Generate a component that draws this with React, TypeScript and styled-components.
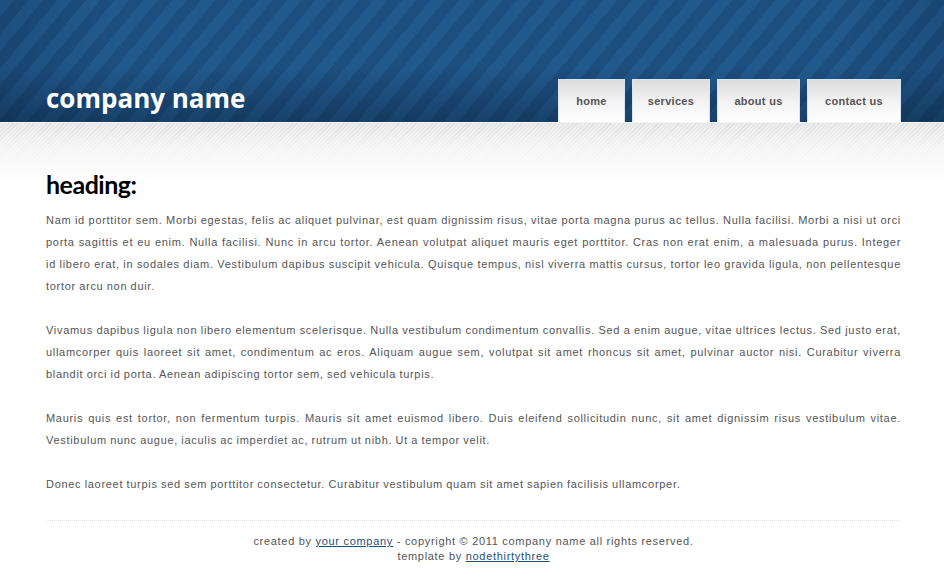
import React from "react";
import styled, { createGlobalStyle } from "styled-components";

const Global = createGlobalStyle`
  html, body { margin: 0; padding: 0; background: #fff; }
  body { font-family: "Liberation Sans", Arial, sans-serif; }
`;

const Header = styled.header`
  height: 122px;
  background:
    linear-gradient(to bottom, rgba(0,0,0,0) 0%, rgba(0,0,0,0) 55%, rgba(5,20,40,0.35) 100%),
    linear-gradient(to right, rgba(5,20,40,0.15) 0%, rgba(0,0,0,0) 12%, rgba(0,0,0,0) 88%, rgba(5,20,40,0.15) 100%),
    repeating-linear-gradient(130deg, #22598d 0px, #22598d 11px, #1c4e7f 11px, #1c4e7f 22px);
`;

const Container = styled.div`
  width: 855px;
  margin: 0 43px 0 46px;
`;

const HeaderInner = styled(Container)`
  height: 122px;
  display: flex;
  align-items: flex-end;
  justify-content: space-between;
`;

const Logo = styled.h1`
  margin: 0 0 8px 0;
  font-family: "Open Sans", "Liberation Sans", sans-serif;
  font-weight: 700;
  font-size: 26px;
  letter-spacing: 0px;
  line-height: 32px;
  color: #fff;
`;

const Nav = styled.nav`
  display: flex;
  gap: 7px;
`;

const Tab = styled.a<{ $w: number }>`
  box-sizing: border-box;
  width: ${(p) => p.$w}px;
  height: 43px;
  display: flex;
  align-items: center;
  justify-content: center;
  border: 1px solid #d6e6f2;
  border-bottom: none;
  background: linear-gradient(to bottom, #dcdcdc 0%, #f4f4f4 55%, #ffffff 100%);
  font-family: "Liberation Sans", Arial, sans-serif;
  font-weight: 700;
  font-size: 11px;
  letter-spacing: 0.3px;
  color: #555;
  text-decoration: none;
`;

const Main = styled.main`
  background:
    linear-gradient(to bottom, rgba(255,255,255,0) 0px, rgba(255,255,255,0.6) 25px, #fff 60px) 0 0 / 100% 60px no-repeat,
    repeating-linear-gradient(135deg, #dfdfdf 0px, #dfdfdf 1px, #ececec 1px, #ececec 3px) 0 0 / 100% 60px no-repeat;
  border-top: 1px solid #f4f4f4;
  padding-top: 46px;
`;

const Heading = styled.h2`
  margin: 0 0 10px 0;
  font-family: Lato, "Liberation Sans", sans-serif;
  font-weight: 700;
  font-size: 25px;
  letter-spacing: -0.5px;
  line-height: 30px;
  color: #000;
`;

const Para = styled.div`
  margin: 0 0 22px 0;
  font-size: 11px;
  line-height: 22px;
  letter-spacing: 0.7px;
  word-spacing: -0.4px;
  color: #555;
`;

const Line = styled.div<{ $last?: boolean }>`
  white-space: nowrap;
  text-align: justify;
  text-align-last: ${(p) => (p.$last ? "left" : "justify")};
`;

const Footer = styled.footer`
  margin-top: 25px;
  border-top: 1px dotted #e2e2e2;
  padding: 13px 0 20px;
  text-align: center;
  font-size: 11px;
  line-height: 15px;
  letter-spacing: 0.7px;
  color: #555;
`;

const FootLink = styled.a`
  color: #1e4e78;
  text-decoration: underline;
`;

const paragraphs: string[][] = [
  [
    "Nam id porttitor sem. Morbi egestas, felis ac aliquet pulvinar, est quam dignissim risus, vitae porta magna purus ac tellus. Nulla facilisi. Morbi a nisi ut orci",
    "porta sagittis et eu enim. Nulla facilisi. Nunc in arcu tortor. Aenean volutpat aliquet mauris eget porttitor. Cras non erat enim, a malesuada purus. Integer",
    "id libero erat, in sodales diam. Vestibulum dapibus suscipit vehicula. Quisque tempus, nisl viverra mattis cursus, tortor leo gravida ligula, non pellentesque",
    "tortor arcu non duir.",
  ],
  [
    "Vivamus dapibus ligula non libero elementum scelerisque. Nulla vestibulum condimentum convallis. Sed a enim augue, vitae ultrices lectus. Sed justo erat,",
    "ullamcorper quis laoreet sit amet, condimentum ac eros. Aliquam augue sem, volutpat sit amet rhoncus sit amet, pulvinar auctor nisi. Curabitur viverra",
    "blandit orci id porta. Aenean adipiscing tortor sem, sed vehicula turpis.",
  ],
  [
    "Mauris quis est tortor, non fermentum turpis. Mauris sit amet euismod libero. Duis eleifend sollicitudin nunc, sit amet dignissim risus vestibulum vitae.",
    "Vestibulum nunc augue, iaculis ac imperdiet ac, rutrum ut nibh. Ut a tempor velit.",
  ],
  [
    "Donec laoreet turpis sed sem porttitor consectetur. Curabitur vestibulum quam sit amet sapien facilisis ullamcorper.",
  ],
];

const tabs = [
  { label: "home", w: 67 },
  { label: "services", w: 78 },
  { label: "about us", w: 83 },
  { label: "contact us", w: 94 },
];

export default function App() {
  return (
    <>
      <Global />
      <Header>
        <HeaderInner>
          <Logo>company name</Logo>
          <Nav>
            {tabs.map((t) => (
              <Tab key={t.label} href="#" $w={t.w}>
                {t.label}
              </Tab>
            ))}
          </Nav>
        </HeaderInner>
      </Header>
      <Main>
        <Container>
          <Heading>heading:</Heading>
          {paragraphs.map((lines, i) => (
            <Para key={i}>
              {lines.map((l, j) => (
                <Line key={j} $last={j === lines.length - 1}>
                  {l}
                </Line>
              ))}
            </Para>
          ))}
          <Footer>
            created by <FootLink href="#">your company</FootLink> - copyright © 2011 company name all rights reserved.
            <br />
            template by <FootLink href="#">nodethirtythree</FootLink>
          </Footer>
        </Container>
      </Main>
    </>
  );
}
